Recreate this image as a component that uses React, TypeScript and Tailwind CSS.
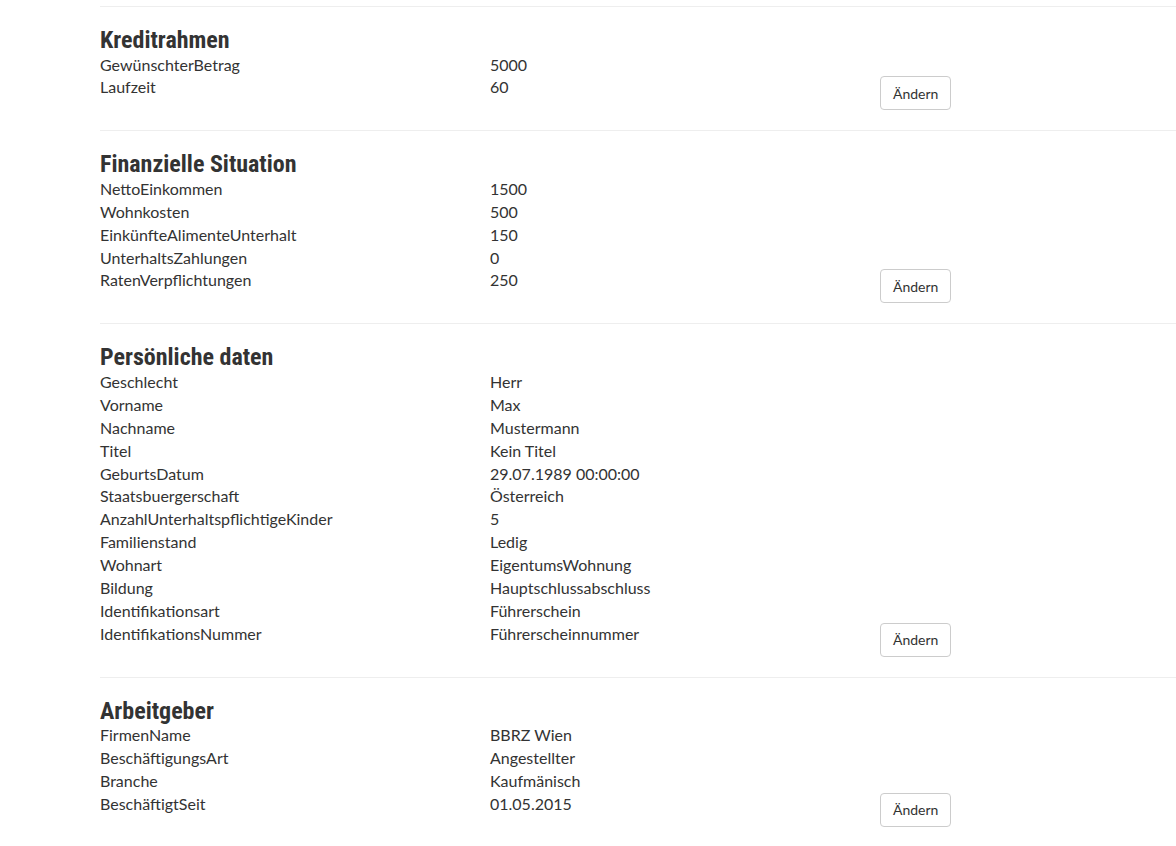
import React from 'react';

type Section = {
  title: string;
  rows: [string, string][];
};

const sections: Section[] = [
  {
    title: 'Kreditrahmen',
    rows: [
      ['GewünschterBetrag', '5000'],
      ['Laufzeit', '60'],
    ],
  },
  {
    title: 'Finanzielle Situation',
    rows: [
      ['NettoEinkommen', '1500'],
      ['Wohnkosten', '500'],
      ['EinkünfteAlimenteUnterhalt', '150'],
      ['UnterhaltsZahlungen', '0'],
      ['RatenVerpflichtungen', '250'],
    ],
  },
  {
    title: 'Persönliche daten',
    rows: [
      ['Geschlecht', 'Herr'],
      ['Vorname', 'Max'],
      ['Nachname', 'Mustermann'],
      ['Titel', 'Kein Titel'],
      ['GeburtsDatum', '29.07.1989 00:00:00'],
      ['Staatsbuergerschaft', 'Österreich'],
      ['AnzahlUnterhaltspflichtigeKinder', '5'],
      ['Familienstand', 'Ledig'],
      ['Wohnart', 'EigentumsWohnung'],
      ['Bildung', 'Hauptschlussabschluss'],
      ['Identifikationsart', 'Führerschein'],
      ['IdentifikationsNummer', 'Führerscheinnummer'],
    ],
  },
  {
    title: 'Arbeitgeber',
    rows: [
      ['FirmenName', 'BBRZ Wien'],
      ['BeschäftigungsArt', 'Angestellter'],
      ['Branche', 'Kaufmänisch'],
      ['BeschäftigtSeit', '01.05.2015'],
    ],
  },
];

function SummaryBlock({ section }: { section: Section }) {
  return (
    <div>
      <hr className="border-0 border-t border-[#eeeeee] my-0" />
      <h2 className="mt-5 text-[24px] leading-[26.6px] font-bold text-[#333333] font-['Roboto_Condensed','DejaVu_Sans_Condensed','Roboto',sans-serif] font-stretch-condensed">
        {section.title}
      </h2>
      {section.rows.map(([label, value], i) => {
        const last = i === section.rows.length - 1;
        return (
          <div key={label} className="grid grid-cols-[390px_390px_390px] items-start">
            <div className="leading-[22.86px]">{label}</div>
            <div className="leading-[22.86px]">{value}</div>
            <div>
              {last && (
                <button className="h-[34px] px-3 border border-[#cccccc] rounded-[4px] bg-white text-[14px] text-[#333333]">
                  Ändern
                </button>
              )}
            </div>
          </div>
        );
      })}
      <div className="h-5" />
    </div>
  );
}

export default function App() {
  return (
    <div className="min-h-screen bg-white pt-[6px] pl-[100px] overflow-hidden text-[16px] text-[#333333] font-['Lato','Open_Sans',sans-serif]">
      {sections.map((s) => (
        <SummaryBlock key={s.title} section={s} />
      ))}
    </div>
  );
}
